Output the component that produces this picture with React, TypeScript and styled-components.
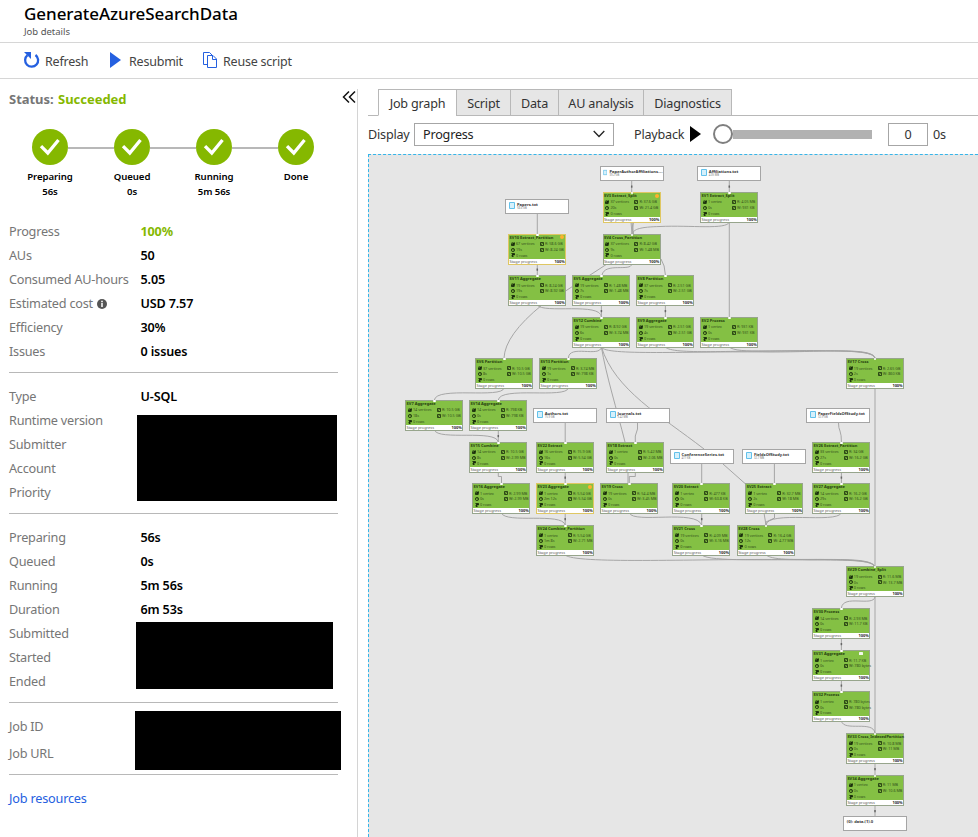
import React from "react";
import styled, { createGlobalStyle } from "styled-components";

const GlobalStyle = createGlobalStyle`
  * { box-sizing: border-box; }
  html, body { margin: 0; padding: 0; background: #fff; overflow: hidden; }
  body { font-family: "Noto Sans", "Open Sans", sans-serif; font-size: 13px; color: #000; }
`;

const Page = styled.div`
  width: 978px;
  height: 837px;
  display: flex;
  flex-direction: column;
  overflow: hidden;
`;
const Header = styled.header`
  height: 43px;
  padding: 3px 24px 0;
  border-bottom: 1px solid #d6d6d6;
`;
const Title = styled.h1`
  margin: 0;
  font-size: 17px;
  font-weight: 500;
  line-height: 22px;
  letter-spacing: -0.05px;
  white-space: nowrap;
`;
const Subtitle = styled.div`
  padding-top: 1px;
  font-size: 9.5px;
  line-height: 12px;
  color: #555;
`;
const Toolbar = styled.nav`
  height: 36px;
  padding: 1px 0 0 23px;
  display: flex;
  align-items: center;
  border-bottom: 1px solid #d6d6d6;
`;
const Command = styled.button<{ $gap: number; $width: number }>`
  display: flex;
  align-items: center;
  gap: ${(p) => p.$gap}px;
  width: ${(p) => p.$width}px;
  padding: 1px 0 0;
  border: 0;
  background: none;
  font: inherit;
  font-size: 12.5px;
  letter-spacing: -0.22px;
  color: #444;
  white-space: nowrap;
  svg { flex: none; position: relative; top: -1.5px; }
`;
const Body = styled.main`
  flex: 1;
  display: flex;
  min-height: 0;
`;
const Side = styled.aside`
  width: 358px;
  margin-top: 10px;
  padding-left: 9px;
  border-right: 1px solid #d4d4d4;
`;
const StatusBar = styled.div`
  height: 20px;
  display: flex;
  justify-content: space-between;
  padding-right: 1px;
`;
const StatusText = styled.div`
  font-size: 13px;
  font-weight: 700;
  line-height: 20px;
  letter-spacing: -0.03px;
  color: #767676;
  white-space: nowrap;
  span { color: #85b800; margin-left: 1px; }
`;
const Steps = styled.ol`
  list-style: none;
  margin: 20px 0 0;
  padding: 0;
  display: flex;
  height: 90px;
`;
const Step = styled.li`
  width: 82px;
  flex: none;
  position: relative;
  display: flex;
  flex-direction: column;
  align-items: center;
  font-size: 9.6px;
  font-weight: 600;
  line-height: 15px;
  letter-spacing: -0.05px;
  &:not(:last-child)::after {
    content: "";
    position: absolute;
    left: 59px;
    top: 18px;
    width: 46px;
    height: 2px;
    background: #b8b8b8;
  }
  svg { margin-bottom: 4px; display: block; }
`;
const Section = styled.section<{ $top: number; $height: number }>`
  width: 329px;
  height: ${(p) => p.$height}px;
  padding-top: ${(p) => p.$top}px;
  border-bottom: 1px solid #b8b8b8;
`;
const Row = styled.div<{ $h?: number }>`
  height: ${(p) => p.$h ?? 24}px;
  display: flex;
  align-items: center;
  white-space: nowrap;
`;
const Label = styled.span`
  width: 131.5px;
  flex: none;
  display: flex;
  align-items: center;
  gap: 4px;
  font-size: 12.7px;
  letter-spacing: -0.24px;
  color: #767676;
  svg { position: relative; top: 1px; }
`;
const Value = styled.span<{ $ok?: boolean }>`
  font-size: 12.6px;
  font-weight: ${(p) => (p.$ok ? 700 : 600)};
  letter-spacing: -0.15px;
  color: ${(p) => (p.$ok ? "#85b800" : "#000")};
`;
const Group = styled.div`
  display: flex;
`;
const LabelColumn = styled.div`
  width: 126px;
  flex: none;
`;
const Redacted = styled.div<{ $w: number; $h: number; $top: number; $left: number }>`
  flex: none;
  width: ${(p) => p.$w}px;
  height: ${(p) => p.$h}px;
  margin: ${(p) => p.$top}px 0 0 ${(p) => p.$left}px;
  background: #000;
`;
const ResourceLink = styled.a`
  display: block;
  margin-top: 11px;
  line-height: 24px;
  font-size: 12.7px;
  letter-spacing: -0.2px;
  color: #2560e0;
`;
const Content = styled.section`
  flex: 1;
  min-width: 0;
  margin-left: 10px;
  padding-top: 10px;
  display: flex;
  flex-direction: column;
`;
const Tabs = styled.div`
  height: 27px;
  display: flex;
  flex: none;
  &::before { content: ""; width: 10px; border-bottom: 1px solid #b8b8b8; }
  &::after { content: ""; flex: 1; border-bottom: 1px solid #b8b8b8; }
`;
const Tab = styled.button<{ $w: number; $active?: boolean }>`
  width: ${(p) => p.$w}px;
  padding: 1px 0 0;
  border: 1px solid #b8b8b8;
  border-right-width: 0;
  border-bottom-color: ${(p) => (p.$active ? "#fff" : "#b8b8b8")};
  background: ${(p) => (p.$active ? "#fff" : "#e6e6e6")};
  font: inherit;
  font-size: 12.6px;
  letter-spacing: -0.18px;
  color: #333;
  white-space: nowrap;
  &:last-child { border-right-width: 1px; }
`;
const Controls = styled.div`
  height: 38px;
  flex: none;
  display: flex;
  align-items: center;
  color: #333;
  font-size: 12.6px;
  letter-spacing: -0.2px;
  padding-bottom: 2px;
`;
const Caption = styled.span<{ $w: number; $indent?: number }>`
  width: ${(p) => p.$w}px;
  padding-left: ${(p) => p.$indent ?? 0}px;
  white-space: nowrap;
`;
const Select = styled.div`
  width: 200px;
  height: 23px;
  padding: 0 8px 0 8px;
  border: 1px solid #a6a6a6;
  display: flex;
  align-items: center;
  justify-content: space-between;
  color: #222;
`;
const Slider = styled.div`
  margin-left: 12px;
  width: 159px;
  height: 20px;
  display: flex;
  align-items: center;
`;
const Thumb = styled.div`
  width: 20px;
  height: 20px;
  border-radius: 50%;
  border: 2px solid #7f7f7f;
  background: #fff;
`;
const Track = styled.div`
  flex: 1;
  height: 9px;
  background: #b2b2b2;
`;
const TimeBox = styled.div`
  width: 40px;
  height: 23px;
  margin: 0 5px 0 16px;
  border: 1px solid #a6a6a6;
  display: flex;
  align-items: center;
  justify-content: center;
`;
const Viewport = styled.div`
  flex: 1;
  position: relative;
  overflow: hidden;
  background: #e6e6e6;
  border-top: 1px dashed #35b5ea;
  border-left: 1px dashed #35b5ea;
`;
/* The graph's own coordinate plane, panned so that the graph fits the viewport. */
const Plane = styled.div`
  position: absolute;
  inset: 0;
  transform: translate(-369px, -155px);
`;
const Edges = styled.svg`
  position: absolute;
  left: 0;
  top: 0;
  overflow: visible;
`;
const StageCard = styled.div<{ $warn?: boolean }>`
  position: absolute;
  width: 58px;
  height: 31px;
  border: 1px solid ${(p) => (p.$warn ? "#dfc763" : "#97a58c")};
  background: #84c044;
  display: flex;
  flex-direction: column;
  font-size: 3.8px;
  line-height: 5.7px;
  color: #35521c;
  white-space: nowrap;
`;
const StageName = styled.div`
  height: 6.4px;
  padding-left: 0.4px;
  font-size: 4px;
  font-weight: 700;
  line-height: 6px;
  color: #26400f;
`;
const Metrics = styled.div`
  flex: 1;
  display: grid;
  grid-template-columns: 29px 1fr;
  grid-auto-rows: 5.8px;
  padding: 0 0 0 1.6px;
`;
const Metric = styled.div`
  display: flex;
  align-items: center;
  gap: 1.2px;
  letter-spacing: -0.05px;
  svg { flex: none; }
`;
const Footer = styled.div`
  height: 5px;
  flex: none;
  display: flex;
  justify-content: space-between;
  background: #fff;
  padding: 0 0.4px;
  line-height: 5.2px;
  font-size: 3.9px;
  color: #555;
  b { color: #222; font-weight: 700; }
`;
const Flag = styled.i<{ $plain?: boolean }>`
  position: absolute;
  right: 1px;
  top: 0.5px;
  width: 4px;
  height: ${(p) => (p.$plain ? "3px" : "4px")};
  border-radius: ${(p) => (p.$plain ? "0.6px" : "50%")};
  margin-right: ${(p) => (p.$plain ? "5px" : "0")};
  background: ${(p) => (p.$plain ? "#f2f7ec" : "#ffb02e")};
`;
const FileCard = styled.div`
  position: absolute;
  width: 64px;
  height: 15px;
  border: 1px solid #a5a5a5;
  background: #fff;
  display: flex;
  gap: 2px;
  padding: 1.5px 0 0 2.5px;
  white-space: nowrap;
`;
const FileText = styled.div`
  font-size: 4.1px;
  font-weight: 700;
  line-height: 5px;
  color: #333;
  small { display: block; font-size: 2.7px; line-height: 3.4px; font-weight: 400; color: #777; }
`;
const OutputText = styled(FileText)`
  line-height: 6px;
`;
/* Connection port on a card's top edge. */
const Port = styled.i`
  position: absolute;
  left: 27px;
  top: -1px;
  width: 2.4px;
  height: 2px;
  border-radius: 1px;
  background: #fff;
`;

type Stage = [number, number, string, string, string, string, string, ("warn" | "note")?];
const stages: Stage[] = [
  [602.6, 192, "SV3 Extract_Split", "37 vertices", "20s", "37.6 GB", "21.4 GB", "warn"],
  [700.2, 192, "SV1 Extract_Split", "1 vertex", "0s", "4.05 MB", "931 KB"],
  [508.2, 233.6, "SV10 Extract_Partition", "67 vertices", "19s", "58.6 GB", "8.24 GB", "warn"],
  [602.6, 233.6, "SV4 Cross_Partition", "37 vertices", "9s", "8.42 GB", "1.48 MB"],
  [508.2, 275.2, "SV11 Aggregate", "19 vertices", "19s", "8.24 GB", "8.92 GB"],
  [572.2, 275.2, "SV5 Aggregate", "19 vertices", "7s", "1.48 MB", "1.48 MB"],
  [636.2, 275.2, "SV8 Partition", "37 vertices", "7s", "2.51 GB", "2.51 GB"],
  [572.2, 317, "SV12 Combine", "19 vertices", "6s", "8.92 GB", "3.74 MB"],
  [636.2, 317, "SV9 Aggregate", "19 vertices", "4s", "2.51 GB", "2.51 GB"],
  [700.2, 317, "SV2 Process", "1 vertex", "0s", "931 KB", "931 KB"],
  [475.2, 358.2, "SV6 Partition", "37 vertices", "8s", "10.5 GB", "10.5 GB"],
  [539.2, 358.2, "SV13 Partition", "19 vertices", "1s", "3.74 MB", "798 KB"],
  [846, 358.2, "SV17 Cross", "19 vertices", "2s", "2.65 GB", "860 KB"],
  [405.2, 400, "SV7 Aggregate", "14 vertices", "18s", "10.5 GB", "10.5 GB"],
  [469.2, 400, "SV14 Aggregate", "14 vertices", "0s", "798 KB", "798 KB"],
  [469.2, 441.6, "SV15 Combine", "14 vertices", "8s", "10.5 GB", "2.99 MB"],
  [536.2, 441.6, "SV22 Extract", "16 vertices", "16s", "15.9 GB", "5.54 GB"],
  [606.2, 441.6, "SV18 Extract", "1 vertex", "0s", "5.42 MB", "2.06 MB"],
  [812.2, 441.6, "SV26 Extract_Partition", "33 vertices", "27s", "34 GB", "16.2 GB"],
  [472.2, 483.2, "SV16 Aggregate", "1 vertex", "0s", "2.99 MB", "2.99 MB"],
  [536.2, 483.2, "SV23 Aggregate", "1 vertex", "2m 12s", "5.54 GB", "5.54 GB", "warn"],
  [600.2, 483.2, "SV19 Cross", "19 vertices", "0s", "54.4 MB", "3.45 MB"],
  [672.4, 483.2, "SV20 Extract", "1 vertex", "0s", "477 KB", "60.8 KB"],
  [745.4, 483.2, "SV25 Extract", "1 vertex", "2s", "32.7 MB", "18 MB"],
  [812.2, 483.2, "SV27 Aggregate", "14 vertices", "29s", "16.2 GB", "16.2 GB"],
  [536.2, 525.2, "SV24 Combine_Partition", "1 vertex", "1m 8s", "5.54 GB", "2.71 MB"],
  [672.4, 525.2, "SV21 Cross", "19 vertices", "0s", "4.09 MB", "3.16 MB"],
  [736.8, 525.2, "SV28 Cross", "19 vertices", "12s", "16.4 GB", "4.77 MB"],
  [846, 566.4, "SV29 Combine_Split", "19 vertices", "0s", "11.6 MB", "13.7 MB"],
  [812.2, 608.2, "SV30 Process", "14 vertices", "0s", "2.93 MB", "11.7 KB"],
  [812.2, 650.2, "SV31 Aggregate", "1 vertex", "0s", "11.7 KB", "780 bytes", "note"],
  [812.2, 691.4, "SV32 Process", "1 vertex", "0s", "780 bytes", "780 bytes"],
  [846, 733.2, "SV33 Cross_IndexedPartition", "19 vertices", "0s", "10.8 MB", "11 MB"],
  [846, 775, "SV34 Aggregate", "1 vertex", "0s", "11 MB", "10.6 MB"],
];

const files: [number, number, string, string][] = [
  [599.6, 166, "PaperAuthorAffiliations....", "39.2 GB"],
  [697.3, 166, "Affiliations.txt", "4.05 MB"],
  [505.4, 199.4, "Papers.txt", "58.6 GB"],
  [533.2, 408, "Authors.txt", "15.9 GB"],
  [606, 408, "Journals.txt", "5.42 MB"],
  [806.4, 408, "PaperFieldsOfStudy.txt", "32.9 GB"],
  [670, 449.4, "ConferenceSeries.txt", "477 KB"],
  [742.4, 449.4, "FieldsOfStudy.txt", "32.7 MB"],
];

/* Vertical edges: x, top, bottom. */
const straight = [
  [631.7, 181, 192], [729.3, 181, 192], [537.3, 214, 234], [729.3, 222, 317],
  [537.3, 264, 275], [601.4, 305, 317], [665.4, 305, 317], [498.3, 430, 442],
  [565.2, 423, 442], [565.2, 472, 483], [565.2, 513, 525], [701.7, 464, 483],
  [774.4, 464, 483], [841.4, 472, 483], [701.7, 513, 525], [841.4, 638, 650],
  [841.4, 680, 691], [875, 388, 567], [875, 597, 733], [875, 763, 775], [875, 805, 817],
];

const curves = [
  "M631 222 L632 234 M632 222 L633.5 234 M633.5 222 L632 234",
  "M729.3 222 C727 230 690 225 660 226.5 C640 227 634 229 632 234",
  "M631.7 264 C631 272 605 262 602 275",
  "M661 259 Q665 265 665.4 275",
  "M607 264 L564 292 M542 305 Q505 335 504 358",
  "M537.3 305 C543 314 601 302 601.4 317",
  "M601.4 347 C600 358 569 344 568.4 358",
  "M504 388 C502 399 436 386 434.4 400",
  "M568.4 388 C566 399 500 386 498.3 400",
  "M434.4 430 C438 441 496 429 498.3 442",
  "M498.3 472 V476.5 H501.5 V483",
  "M637.5 423 V429 L635.3 436 V442",
  "M601.4 347 C606 375 617 410 625 442",
  "M601.4 347 C615 390 660 415 704 449 M723 464 L745.6 484",
  "M601.4 347 C604 356 690 351 770 352 C825 352 872 347 875 358",
  "M665.4 347 C672 355 735 350 800 351 C840 351 872 350 875 358",
  "M729.3 347 C736 354 785 350 820 350.6 C850 351 873 351 875 358",
  "M838.5 423 Q838.5 428 840 431 Q841.5 435 841.4 442",
  "M635.3 472 V476.5 H629.3 V483 M628 472 V483",
  "M501.3 513 C506 524 562 512 565.2 525",
  "M629.3 513 C634 524 696 509 701.7 525",
  "M764 513 L766 525 M774.5 513 V518 L766 522 V525",
  "M841.4 513 C836 524 768 510 766 525",
  "M565.2 555 C575 564 690 559 780 559.5 C835 560 872 557 875 567",
  "M701.7 555 C710 562 770 559 810 560 C850 560 872 560 875 567",
  "M766 555 C774 561 800 559 825 559.5 C858 560 873 561 875 567",
  "M875 597 C873 607 843 594 841.4 608",
  "M841.4 721 C844 732 873 720 875 733",
];

function GraphEdges() {
  return (
    <Edges width="978" height="837" fill="none" stroke="#a2a2a2" strokeWidth="0.95">
      {straight.map(([x, a, b], i) => (
        <g key={i}>
          <path d={`M${x} ${a}V${b}`} />
          {b - a < 15 && <path d={`M${x} ${(a + b) / 2 - 1}v2.2`} stroke="#666" strokeWidth="1.5" />}
        </g>
      ))}
      {curves.map((d) => (
        <path key={d} d={d} />
      ))}
    </Edges>
  );
}

const Glyph = ({ kind }: { kind: "vertices" | "time" | "rows" | "io" }) => (
  <svg width="4" height="4" viewBox="0 0 8 8" fill="none" stroke="#16290a" strokeWidth="1.6">
    {kind === "vertices" && <path d="M1 2h3v3h3V1M1 3v4h6" fill="#16290a" />}
    {kind === "time" && <><circle cx="4" cy="4" r="3.2" /><path d="M4 2v2h2" strokeWidth="1" /></>}
    {kind === "rows" && <path d="M1 1h6v3H2v3h3" fill="#16290a" />}
    {kind === "io" && <path d="M1 1H7V7H1ZM2 5l3-2" />}
  </svg>
);

function StageNode({ stage }: { stage: Stage }) {
  const [x, y, name, vertices, time, read, write, flag] = stage;
  return (
    <StageCard $warn={flag === "warn"} style={{ left: x, top: y }}>
      <Port />
      <StageName>{name}</StageName>
      <Metrics>
        <Metric><Glyph kind="vertices" />{vertices}</Metric>
        <Metric><Glyph kind="io" />R: {read}</Metric>
        <Metric><Glyph kind="time" />{time}</Metric>
        <Metric><Glyph kind="io" />W: {write}</Metric>
        <Metric><Glyph kind="rows" />0 rows</Metric>
      </Metrics>
      <Footer><span>Stage progress</span><b>100%</b></Footer>
      {flag && <Flag $plain={flag === "note"} />}
    </StageCard>
  );
}

const Check = () => (
  <svg width="36" height="36" viewBox="0 0 36 36">
    <circle cx="18" cy="18" r="18" fill="#85b800" />
    <path d="M9 17.2L15.8 24L26.5 11" fill="none" stroke="#fff" strokeWidth="3.3" />
  </svg>
);

const steps: [string, string][] = [["Preparing", "56s"], ["Queued", "0s"], ["Running", "5m 56s"], ["Done", ""]];

export default function App() {
  return (
    <>
      <GlobalStyle />
      <Page>
        <Header>
          <Title>GenerateAzureSearchData</Title>
          <Subtitle>Job details</Subtitle>
        </Header>
        <Toolbar>
          <Command $gap={5} $width={86}>
            <svg width="17" height="18" viewBox="0 0 17 18" fill="none">
              <path d="M4.5 4.2A6.5 6.5 0 1 0 12.5 4" stroke="#2560e0" strokeWidth="2.3" />
              <path d="M1 1H8V8Z" fill="#2560e0" />
            </svg>
            Refresh
          </Command>
          <Command $gap={8} $width={94}>
            <svg width="12" height="16" viewBox="0 0 12 16"><path d="M1 0L12 8L1 16Z" fill="#2560e0" /></svg>
            Resubmit
          </Command>
          <Command $gap={6} $width={100}>
            <svg width="14" height="16" viewBox="0 0 14 16" fill="none" stroke="#2560e0">
              <path d="M4 12.5H.5V.5H6.5L9 3" />
              <path d="M4.5 3.5H10L13.5 7V15.5H4.5ZM9.5 3.5V7.5H13.5" fill="#fff" />
            </svg>
            Reuse script
          </Command>
        </Toolbar>
        <Body>
          <Side>
            <StatusBar>
              <StatusText>Status: <span>Succeeded</span></StatusText>
              <svg width="14" height="16" viewBox="0 0 14 16" fill="none" stroke="#111" strokeWidth="1.5">
                <path d="M7 2.5L1.5 8L7 13.5M13 2.5L7.5 8L13 13.5" />
              </svg>
            </StatusBar>
            <Steps>
              {steps.map(([name, time]) => (
                <Step key={name}><Check /><span>{name}</span><span>{time}</span></Step>
              ))}
            </Steps>
            <Section $top={0} $height={154}>
              <Row><Label>Progress</Label><Value $ok>100%</Value></Row>
              <Row><Label>AUs</Label><Value>50</Value></Row>
              <Row><Label>Consumed AU-hours</Label><Value>5.05</Value></Row>
              <Row>
                <Label>
                  Estimated cost
                  <svg width="10" height="10" viewBox="0 0 10 10">
                    <circle cx="5" cy="5" r="5" fill="#555" />
                    <path d="M4.2 2.5H5.8M5 4V8" stroke="#fff" strokeWidth="1.5" fill="none" />
                  </svg>
                </Label>
                <Value>USD 7.57</Value>
              </Row>
              <Row><Label>Efficiency</Label><Value>30%</Value></Row>
              <Row><Label>Issues</Label><Value>0 issues</Value></Row>
            </Section>
            <Section $top={11} $height={141}>
              <Row><Label>Type</Label><Value>U-SQL</Value></Row>
              <Group>
                <LabelColumn>
                  {["Runtime version", "Submitter", "Account", "Priority"].map((t) => <Row key={t}><Label>{t}</Label></Row>)}
                </LabelColumn>
                <Redacted $w={200} $h={86} $top={7} $left={2} />
              </Group>
            </Section>
            <Section $top={11} $height={189}>
              <Row><Label>Preparing</Label><Value>56s</Value></Row>
              <Row><Label>Queued</Label><Value>0s</Value></Row>
              <Row><Label>Running</Label><Value>5m 56s</Value></Row>
              <Row><Label>Duration</Label><Value>6m 53s</Value></Row>
              <Group>
                <LabelColumn>
                  {["Submitted", "Started", "Ended"].map((t) => <Row key={t}><Label>{t}</Label></Row>)}
                </LabelColumn>
                <Redacted $w={197} $h={67} $top={1} $left={1} />
              </Group>
            </Section>
            <Section $top={8} $height={72}>
              <Group>
                <LabelColumn>
                  <Row $h={30}><Label>Job ID</Label></Row>
                  <Row $h={24}><Label>Job URL</Label></Row>
                </LabelColumn>
                <Redacted $w={206} $h={59} $top={0} $left={0} />
              </Group>
            </Section>
            <ResourceLink>Job resources</ResourceLink>
          </Side>
          <Content>
            <Tabs>
              <Tab $w={78} $active>Job graph</Tab>
              <Tab $w={54}>Script</Tab>
              <Tab $w={48}>Data</Tab>
              <Tab $w={85}>AU analysis</Tab>
              <Tab $w={89}>Diagnostics</Tab>
            </Tabs>
            <Controls>
              <Caption $w={46}>Display</Caption>
              <Select>
                Progress
                <svg width="12" height="8" viewBox="0 0 12 8" fill="none" stroke="#222" strokeWidth="1.3"><path d="M.7 1L6 6.5L11.3 1" /></svg>
              </Select>
              <Caption $w={76} $indent={20}>Playback</Caption>
              <svg width="11" height="16" viewBox="0 0 11 16"><path d="M0 0L11 8L0 16Z" fill="#000" /></svg>
              <Slider><Thumb /><Track /></Slider>
              <TimeBox>0</TimeBox>
              <span>0s</span>
            </Controls>
            <Viewport>
              <Plane>
                <GraphEdges />
                {stages.map((s) => <StageNode key={s[2]} stage={s} />)}
                {files.map(([x, y, name, size]) => (
                  <FileCard key={name} style={{ left: x, top: y }}>
                    <svg width="6" height="7" viewBox="0 0 6 7"><path d="M.5.5h5v6h-5z" fill="#d5f0fb" stroke="#63c1ea" /></svg>
                    <FileText>{name}<small>{size}</small></FileText>
                  </FileCard>
                ))}
                <FileCard style={{ left: 843.3, top: 816.3 }}><OutputText>(0): data.(1).0</OutputText></FileCard>
              </Plane>
            </Viewport>
          </Content>
        </Body>
      </Page>
    </>
  );
}
